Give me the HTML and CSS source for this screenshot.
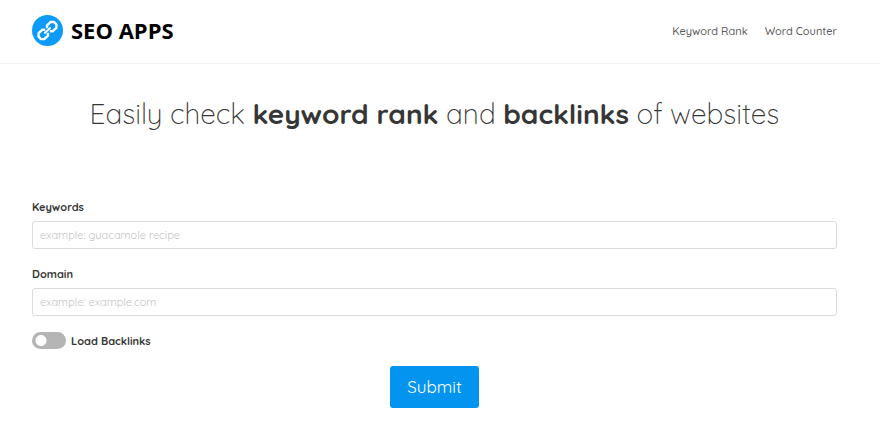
FILE: index.html
```html
<!DOCTYPE html>
<html lang="en">
<head>
  <meta charset="UTF-8" />
  <meta name="viewport" content="width=device-width, initial-scale=1.0"/>
  <title>SEO Apps - Keyword Rank</title>
  <link rel="stylesheet" href="styles.css">
</head>
<body>
  <header class="header">
    <a class="logo" href="#">
      <svg class="logo-icon" viewBox="0 0 31 31" aria-hidden="true">
        <circle cx="15.5" cy="15.5" r="15.5" fill="#0c9bfb"/>
        <g transform="rotate(-43 15.5 15.5)" fill="none" stroke="#fff" stroke-width="2.4" stroke-linejoin="round">
          <path d="M14.2 13.6 12.4 11.4H7.2L4.8 13.8v3.4l2.4 2.4h5.2l1.8-2.2"/>
          <path d="M16.8 13.6l1.8-2.2h5.2l2.4 2.4v3.4l-2.4 2.4h-5.2l-1.8-2.2"/>
          <path d="M12 15.5h7" stroke-width="2" stroke-linecap="round"/>
        </g>
      </svg>
      <span>SEO APPS</span>
    </a>
    <nav class="nav">
      <a href="#">Keyword Rank</a>
      <a href="#">Word Counter</a>
    </nav>
  </header>

  <main class="content">
    <h1>Easily check <strong>keyword rank</strong> and <strong>backlinks</strong> of websites</h1>

    <form class="rank-form">
      <label class="field-label" for="keywords">Keywords</label>
      <input class="field" type="text" id="keywords" placeholder="example: guacamole recipe" />

      <label class="field-label" for="domain">Domain</label>
      <input class="field" type="text" id="domain" placeholder="example: example.com" />

      <div class="toggle">
        <input class="switch" type="checkbox" id="backlinks" />
        <label for="backlinks">Load Backlinks</label>
      </div>

      <button class="submit" type="submit">Submit</button>
    </form>
  </main>
</body>
</html>
```

FILE: styles.css
```css
* { box-sizing: border-box; }

body {
  margin: 0;
  font-family: Quicksand, Inter, sans-serif;
  font-size: 11px;
  font-weight: 500;
  color: #363636;
  background: #fff;
}

.header {
  display: flex;
  align-items: center;
  justify-content: space-between;
  padding: 15px 43px 17px 32px;
  border-bottom: 1px solid #f0f0f0;
}

.logo {
  display: flex;
  align-items: center;
  gap: 8px;
  font-family: "Open Sans", sans-serif;
  font-size: 22px;
  font-weight: 700;
  line-height: 28px;
  color: #000;
  text-decoration: none;
}

.logo-icon {
  width: 31px;
  height: 31px;
}

.logo span { padding-bottom: 2px; }

.nav {
  display: flex;
  gap: 17px;
}

.nav a {
  color: #5a5a5a;
  text-decoration: none;
}

.content {
  padding: 31px 43px 28px 32px;
}

h1 {
  margin: 0 0 66px;
  font-size: 28px;
  font-weight: 300;
  line-height: 38px;
  text-align: center;
}

h1 strong { font-weight: 700; }

.rank-form {
  display: flex;
  flex-direction: column;
}

.field-label {
  margin-bottom: 6px;
  font-weight: 700;
  line-height: 16px;
}

.field {
  height: 28px;
  margin-bottom: 17px;
  padding: 0 7px;
  border: 1px solid #dbdbdb;
  border-radius: 3px;
  font: inherit;
  font-weight: 400;
  color: #363636;
}

.field::placeholder { color: #c4c4c4; }

.toggle {
  display: flex;
  align-items: center;
  gap: 5px;
  margin: -1px 0 17px;
  font-weight: 700;
}

.switch {
  appearance: none;
  width: 34px;
  height: 17px;
  margin: 0;
  border-radius: 9px;
  background: radial-gradient(circle at 9px 50%, #fff 5px, #b5b5b5 6px);
}

.switch:checked {
  background: radial-gradient(circle at 25px 50%, #fff 5px, #0394f0 6px);
}

.submit {
  align-self: center;
  padding: 8px 17px;
  border: 0;
  border-radius: 3px;
  background: #0394f0;
  color: #fff;
  font-family: inherit;
  font-size: 17px;
  font-weight: 400;
  line-height: 26px;
}
```
